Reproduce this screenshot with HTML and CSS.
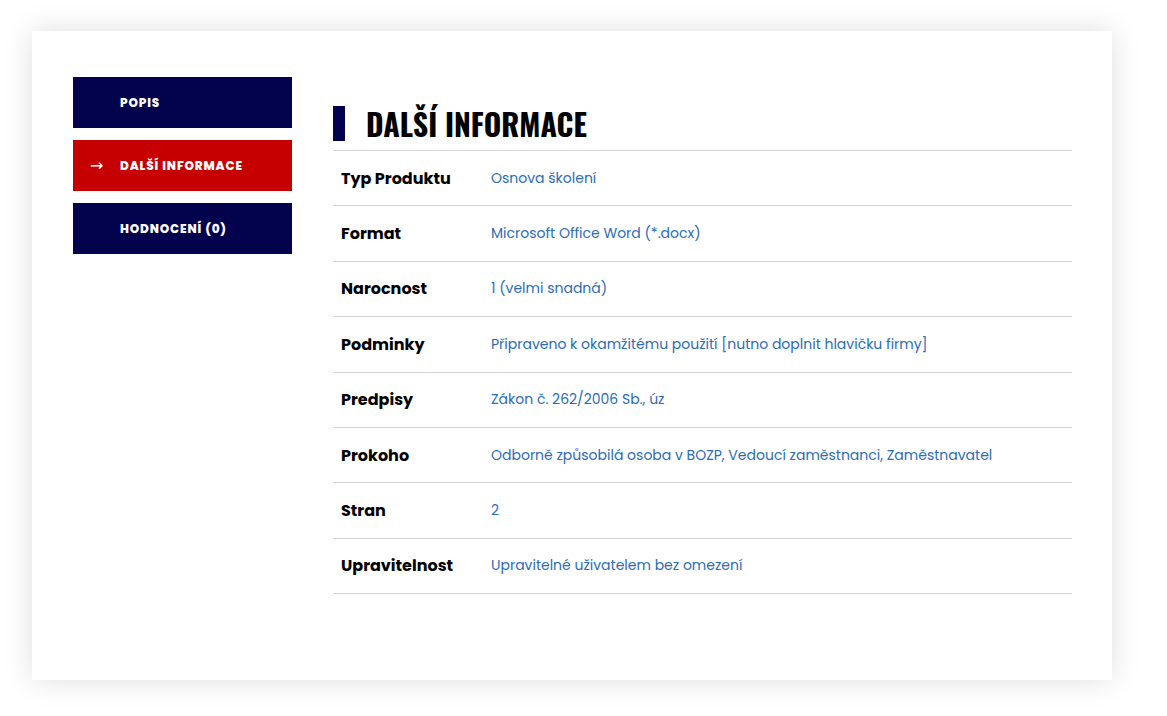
FILE: index.html
```html
<!DOCTYPE html>
<html lang="cs">
<head>
<meta charset="utf-8">
<link rel="stylesheet" href="styles.css">
</head>
<body>
<div class="card">
  <nav class="tabs">
    <div class="tab">POPIS</div>
    <div class="tab active"><span class="arrow">→</span>DALŠÍ INFORMACE</div>
    <div class="tab">HODNOCENÍ (0)</div>
  </nav>
  <section class="content">
    <h2 class="title"><span class="bar"></span><span class="title-text">DALŠÍ INFORMACE</span></h2>
    <table class="info">
      <tr><th>Typ Produktu</th><td>Osnova školení</td></tr>
      <tr><th>Format</th><td>Microsoft Office Word (*.docx)</td></tr>
      <tr><th>Narocnost</th><td>1 (velmi snadná)</td></tr>
      <tr><th>Podminky</th><td>Připraveno k okamžitému použití [nutno doplnit hlavičku firmy]</td></tr>
      <tr><th>Predpisy</th><td>Zákon č. 262/2006 Sb., úz</td></tr>
      <tr><th>Prokoho</th><td>Odborně způsobilá osoba v BOZP, Vedoucí zaměstnanci, Zaměstnavatel</td></tr>
      <tr><th>Stran</th><td>2</td></tr>
      <tr><th>Upravitelnost</th><td>Upravitelné uživatelem bez omezení</td></tr>
    </table>
  </section>
</div>
</body>
</html>
```
FILE: styles.css
```css
* { box-sizing: border-box; }
html, body { margin: 0; padding: 0; background: #ffffff; }
body { font-family: "Poppins", "Inter", "Noto Sans", sans-serif; min-height: 716px; padding-top: 31px; }
.card {
  margin: 0 0 0 32px;
  width: 1080px;
  height: 649px;
  background: #fff;
  box-shadow: 0 0 28px rgba(0,0,0,0.13);
  padding: 46px 40px 0 41px;
  display: grid;
  grid-template-columns: 219px 1fr;
  column-gap: 41px;
  align-items: start;
}
.tabs { display: flex; flex-direction: column; gap: 12px; }
.tab {
  height: 51px;
  background: #03034d;
  color: #fff;
  font-weight: 800;
  font-size: 12px;
  letter-spacing: 0.85px;
  display: flex;
  align-items: center;
  padding-left: 47px;
  position: relative;
}
.tab.active { background: #c60000; }
.arrow {
  position: absolute;
  left: 17px;
  font-family: "DejaVu Sans", sans-serif;
  font-weight: 400;
  font-size: 16px;
  letter-spacing: 0;
}
.content { padding-top: 29px; }
.title {
  margin: 0;
  height: 44px;
  display: flex;
  align-items: flex-start;
  gap: 21px;
}
.bar { width: 12px; height: 35px; background: #03034d; flex: none; }
.title-text {
  font-family: "Oswald", "Liberation Sans Narrow", "DejaVu Sans Condensed", sans-serif;
  font-weight: 700;
  font-size: 30px;
  line-height: 30px;
  margin-top: 3px;
  color: #000;
}
.info {
  width: 100%;
  border-collapse: collapse;
  border-top: 1px solid #d2d2d2;
}
.info tr { border-bottom: 1px solid #d2d2d2; height: 55.4px; }
.info th {
  text-align: left;
  width: 158px;
  padding: 0 0 0 8px;
  font-size: 16px;
  font-weight: 700;
  color: #000;
}
.info td {
  padding: 0;
  font-size: 14px;
  color: #2b6cb5;
}
```
